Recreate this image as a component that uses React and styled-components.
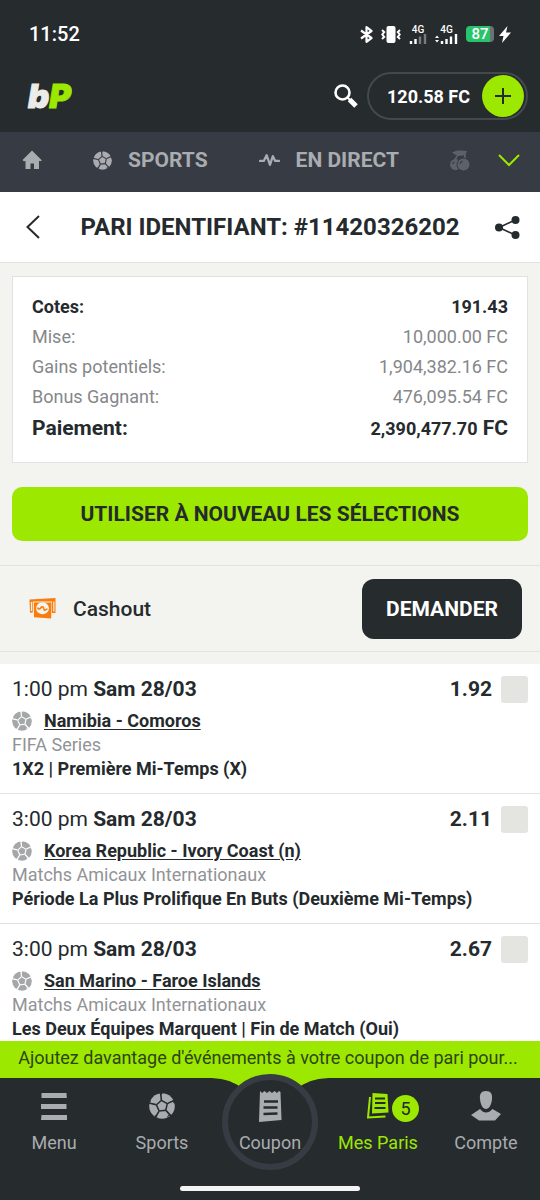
import React from "react";
import styled, { createGlobalStyle } from "styled-components";

const c = {
  dark: "#262b2e",
  slate: "#373b43",
  lime: "#9ce800",
  ink: "#252a2d",
  muted: "#85878a",
  pale: "#a9acb0",
  paper: "#f3f4ef",
  line: "#e2e3df",
};

const GlobalStyle = createGlobalStyle`
  * { box-sizing: border-box; }
  body { margin: 0; font-family: Roboto, "Liberation Sans", sans-serif; color: ${c.ink}; background: ${c.paper}; }
  button { font: inherit; color: inherit; border: 0; padding: 0; background: none; cursor: pointer; }
  svg { display: block; flex: none; }
  h1, h2, p, dl, dt, dd, ul { margin: 0; padding: 0; }
`;

const Shell = styled.div`
  display: flex;
  flex-direction: column;
  height: 100vh;
`;

const StatusBar = styled.div`
  display: flex;
  align-items: center;
  justify-content: space-between;
  height: 60px;
  padding: 8px 29px 0 29px;
  background: ${c.dark};
  color: #fff;
  font-size: 20px;
  font-weight: 500;
`;

const StatusIcons = styled.div`
  display: flex;
  align-items: center;
  gap: 8px;
`;

const Signal = styled.div`
  display: flex;
  flex-direction: column;
  align-items: center;
  font-size: 10px;
  line-height: 9px;
`;

const Power = styled.div`
  display: flex;
  align-items: center;
  gap: 5px;
`;

const BatteryPill = styled.div`
  height: 16px;
  width: 28px;
  border-radius: 4px;
  background: linear-gradient(90deg, #27c46b 24px, #6c7174 24px);
  font-size: 15px;
  line-height: 17px;
  text-align: center;
`;

const Header = styled.header`
  display: flex;
  align-items: center;
  height: 72px;
  padding: 0 12px 0 28px;
  background: ${c.dark};
  color: #fff;
`;

const Logo = styled.a`
  margin-right: auto;
  font-family: Inter, Roboto, sans-serif;
  font-size: 33px;
  font-weight: 900;
  font-style: italic;
  line-height: 40px;
  color: #ebebe8;
  -webkit-text-stroke: 1px currentColor;
  text-decoration: none;
  span { color: ${c.lime}; }
`;

const Balance = styled.div`
  display: flex;
  align-items: center;
  justify-content: space-between;
  width: 161px;
  height: 48px;
  margin-left: 9px;
  padding: 0 2px 0 18px;
  border: 2px solid #44494f;
  border-radius: 24px;
  font-size: 18px;
  font-weight: 700;
  white-space: nowrap;
`;

const AddButton = styled.button`
  display: grid;
  place-items: center;
  width: 42px;
  height: 42px;
  border-radius: 50%;
  background: ${c.lime};
`;

const Tabs = styled.nav`
  display: flex;
  align-items: center;
  height: 60px;
  padding: 0 20px 4px 22px;
  background: ${c.slate};
  color: ${c.pale};
`;

const Tab = styled.a`
  display: flex;
  align-items: center;
  gap: 16px;
  margin-right: ${(p) => (p.$last ? 0 : 51)}px;
  color: inherit;
  font-size: 21px;
  font-weight: 700;
  text-decoration: none;
  white-space: nowrap;
`;

const ExpandButton = styled.button`
  margin-left: auto;
  color: ${c.lime};
`;

const TitleBar = styled.div`
  display: flex;
  align-items: center;
  justify-content: space-between;
  height: 71px;
  padding: 0 20px 0 26px;
  background: #fff;
  border-bottom: 1px solid ${c.line};
`;

const BackButton = styled.button`
  width: 19px;
`;

const Title = styled.h1`
  font-size: 24px;
  font-weight: 700;
  white-space: nowrap;
`;

const Main = styled.main`
  flex: 1;
  min-height: 0;
  overflow-y: auto;
  scrollbar-width: none;
`;

const Summary = styled.dl`
  margin: 13px 12px 24px;
  padding: 15px 19px 17px;
  background: #fff;
  border: 1px solid ${c.line};
`;

const SummaryRow = styled.div`
  display: flex;
  justify-content: space-between;
  line-height: 30px;
  font-size: 18px;
  font-weight: ${(p) => (p.$strong ? 700 : 400)};
  color: ${(p) => (p.$strong ? c.ink : c.muted)};
`;

const TotalRow = styled(SummaryRow)`
  font-size: 21px;
  line-height: 32px;
  dd span { font-size: 18px; }
`;

const ReuseButton = styled.button`
  display: block;
  width: calc(100% - 24px);
  height: 54px;
  margin: 0 12px 24px;
  border-radius: 10px;
  background: ${c.lime};
  font-size: 21px;
  font-weight: 700;
`;

const Cashout = styled.section`
  display: flex;
  align-items: center;
  height: 87px;
  padding: 0 18px 0 29px;
  border: solid ${c.line};
  border-width: 1px 0;
`;

const CashoutTitle = styled.h2`
  margin-left: 17px;
  font-size: 21px;
  font-weight: 500;
`;

const RequestButton = styled.button`
  width: 160px;
  height: 60px;
  margin-left: auto;
  border-radius: 12px;
  background: ${c.dark};
  color: #fff;
  font-size: 21px;
  font-weight: 700;
`;

const BetList = styled.ul`
  margin-top: 12px;
  background: #fff;
  list-style: none;
`;

const Bet = styled.li`
  padding: 11px 12px 12px;
  border-bottom: 1px solid ${c.line};
  font-size: 18px;
  line-height: 24px;
`;

const BetHead = styled.div`
  display: flex;
  align-items: center;
  height: 28px;
  margin-bottom: 6px;
  font-size: 21px;
`;

const Odds = styled.strong`
  margin-left: auto;
`;

const PickBox = styled.input`
  appearance: none;
  width: 27px;
  height: 27px;
  margin: 0 0 0 9px;
  border-radius: 3px;
  background: #e4e5e1;
`;

const Teams = styled.div`
  display: flex;
  align-items: center;
  gap: 12px;
  color: #a5a7a8;
`;

const MatchLink = styled.a`
  color: ${c.ink};
  font-weight: 700;
  text-underline-offset: 2px;
`;

const League = styled.p`
  color: #919396;
`;

const Market = styled.p`
  font-weight: 700;
  white-space: nowrap;
`;

const Promo = styled.p`
  height: 37px;
  flex: none;
  padding-right: 4px;
  background: ${c.lime};
  color: #2d4415;
  font-size: 18px;
  line-height: 33px;
  text-align: center;
  white-space: nowrap;
`;

const BottomNav = styled.nav`
  position: relative;
  display: flex;
  flex: none;
  height: 98px;
  background: ${c.dark};
`;

const Notch = styled.svg`
  position: absolute;
  top: 0;
  left: calc(50% - 65px);
`;

const NavItem = styled.a`
  position: relative;
  display: flex;
  flex: 1 1 0;
  flex-direction: column;
  align-items: center;
  color: ${(p) => (p.$active ? c.lime : c.pale)};
  font-size: 18px;
  line-height: 24px;
  text-decoration: none;
  white-space: nowrap;
`;

const Ring = styled.span`
  position: absolute;
  top: -4px;
  left: calc(50% - 48px);
  width: 96px;
  height: 96px;
  border: 6px solid ${c.slate};
  border-radius: 50%;
  background: ${c.dark};
`;

const NavIcon = styled.span`
  position: relative;
  display: flex;
  align-items: center;
  height: 53px;
  padding-top: 3px;
`;

const NavLabel = styled.span`
  position: relative;
`;

const Count = styled.span`
  position: absolute;
  top: 17px;
  left: 25px;
  width: 27px;
  height: 27px;
  border-radius: 50%;
  background: ${c.lime};
  color: ${c.ink};
  line-height: 28px;
  text-align: center;
`;

const HomeBar = styled.div`
  flex: none;
  height: 24px;
  padding-top: 10px;
  background: ${c.dark};
  &::after {
    content: "";
    display: block;
    width: 180px;
    height: 5px;
    margin: 0 auto;
    border-radius: 3px;
    background: #f4f4f4;
  }
`;

const Ball = ({ size, gap }) => (
  <svg width={size} height={size} viewBox="0 0 26 26" aria-hidden="true">
    <circle cx="13" cy="13" r="12.8" fill="currentColor" />
    <g transform="rotate(-6 13 13)">
      <path d="M13 6.4 19.3 11 16.9 18.4H9.1L6.7 11Z" fill={gap} />
      <path
        d="M13 7V0M19 11l7-2.5M16.6 18l4.4 6M9.4 18 5 24M7 11 0 8.5"
        stroke={gap}
        strokeWidth="1.6"
      />
      <path d="M13 8.2 17.6 11.5 15.8 16.9h-5.6L8.400 11.5Z" fill="currentColor" />
    </g>
    <path d="M10 0 14 0 12.2 1.8ZM25 7l1 4-2-1.600ZM22 21l-4 4 .8-2.400ZM5 22l4 3-1.800-2.400ZM0 9l1-3 .8 2.800Z" fill={gap} />
  </svg>
);

const Bluetooth = () => (
  <svg width="13" height="17" viewBox="0 0 13 17" fill="none" stroke="#fff" strokeWidth="2.2" strokeLinejoin="round">
    <path d="M1 4.500 11.500 12 6.500 15.800V1.200L11.500 5 1 12.500" />
  </svg>
);

const Vibrate = () => (
  <svg width="20" height="17" viewBox="0 0 20 17">
    <rect x="5.500" y="0" width="9" height="17" rx="2" fill="#fff" />
    <path d="M1 4 3.200 6 1.300 8.500 3.200 11 1 13M19 4 16.800 6 18.700 8.500 16.800 11 19 13" fill="none" stroke="#fff" strokeWidth="2" />
  </svg>
);

const Bars = ({ weak }) => (
  <svg width={weak ? 18 : 23} height="10" viewBox={weak ? "5 0 18 10" : "0 0 23 10"}>
    {!weak && <path d="M0 4 2 1.500 4 4ZM0 6 2 8.500 4 6Z" fill="#fff" />}
    <path d="M7 7v3M11.500 5v5" stroke="#fff" strokeWidth="2.400" />
    <path d="M16 2.500V10M21 0v10" stroke={weak ? "#777b7e" : "#fff"} strokeWidth="2.400" />
  </svg>
);

const bets = [
  { time: "1:00 pm", date: "Sam 28/03", odds: "1.92", match: "Namibia - Comoros", league: "FIFA Series", market: "1X2 | Première Mi-Temps (X)" },
  { time: "3:00 pm", date: "Sam 28/03", odds: "2.11", match: "Korea Republic - Ivory Coast (n)", league: "Matchs Amicaux Internationaux", market: "Période La Plus Prolifique En Buts (Deuxième Mi-Temps)" },
  { time: "3:00 pm", date: "Sam 28/03", odds: "2.67", match: "San Marino - Faroe Islands", league: "Matchs Amicaux Internationaux", market: "Les Deux Équipes Marquent | Fin de Match (Oui)" },
];

export default function App() {
  return (
    <Shell>
      <GlobalStyle />
      <StatusBar>
        <span>11:52</span>
        <StatusIcons>
          <Bluetooth />
          <Vibrate />
          <Signal>4G<Bars weak /></Signal>
          <Signal>4G<Bars /></Signal>
          <Power>
            <BatteryPill>87</BatteryPill>
            <svg width="12" height="17" viewBox="0 0 12 17"><path d="M8.500 0 0 10h4.500L3 17 12 6.500H7Z" fill="#fff" /></svg>
          </Power>
        </StatusIcons>
      </StatusBar>
      <Header>
        <Logo href="#accueil">b<span>P</span></Logo>
        <button aria-label="Rechercher">
          <svg width="24" height="24" viewBox="0 0 24 24" fill="none" stroke="#fff">
            <circle cx="8.500" cy="8.500" r="7" strokeWidth="2.600" />
            <path d="m13.500 13.500 2.500 2.500" strokeWidth="2" />
            <path d="m15.500 15.500 6.500 6.500" strokeWidth="5" />
          </svg>
        </button>
        <Balance>
          120.58 FC
          <AddButton aria-label="Déposer">
            <svg width="16" height="16" viewBox="0 0 16 16" stroke={c.ink} strokeWidth="2"><path d="M8 0v16M0 8h16" /></svg>
          </AddButton>
        </Balance>
      </Header>
      <Tabs>
        <Tab href="#accueil" aria-label="Accueil">
          <svg width="20" height="20" viewBox="0 0 20 20" fill="currentColor">
            <path d="M10 .500 20 10.500 18 11.200 17 10.800V19h-5v-5.500H8.500V19H3.500V10.800L2 11.500.500 10Z" />
          </svg>
        </Tab>
        <Tab href="#sports"><Ball size={19} gap={c.slate} />SPORTS</Tab>
        <Tab href="#direct">
          <svg width="21" height="16" viewBox="0 0 22 16" fill="none" stroke="currentColor" strokeWidth="2.4" strokeLinejoin="round" strokeLinecap="round">
            <path d="M1 9h4L8 3l3.500 10 3-9 2.500 5h4" />
          </svg>
          EN DIRECT
        </Tab>
        <Tab href="#casino" aria-label="Casino" $last>
          <svg width="20" height="21" viewBox="0 0 20 21" fill="#5d6168">
            <path d="M2 2.500C6 0 11 0 17 1c-1 3-2 4-4.500 4.500C9 6.500 5 5 2 2.500Z" />
            <path d="M11 4C7 5 6 7 5 10M15 3c-1 3 0 5 1 7" fill="none" stroke="#5d6168" strokeWidth="1.800" />
            <circle cx="5.500" cy="14.500" r="5.500" />
            <circle cx="13.500" cy="14.500" r="6.500" stroke={c.slate} />
            <path d="M2.500 14a3 3 0 0 1 2-2M10 14a4 4 0 0 1 2.500-3" fill="none" stroke={c.slate} strokeWidth="1.200" />
          </svg>
        </Tab>
        <ExpandButton aria-label="Plus de sections">
          <svg width="22" height="13" viewBox="0 0 22 13" fill="none" stroke="currentColor" strokeWidth="2"><path d="m1 1 10 10L21 1" /></svg>
        </ExpandButton>
      </Tabs>
      <TitleBar>
        <BackButton aria-label="Retour">
          <svg width="14" height="24" viewBox="0 0 14 24" fill="none" stroke={c.ink} strokeWidth="2"><path d="M13 1 1.500 12 13 23" /></svg>
        </BackButton>
        <Title>PARI IDENTIFIANT: #11420326202</Title>
        <button aria-label="Partager">
          <svg width="25" height="23" viewBox="0 0 25 23" fill={c.ink}>
            <path d="M20 4 4 11.500 20 19" fill="none" stroke={c.ink} strokeWidth="1.600" />
            <circle cx="4" cy="11.500" r="4" /><circle cx="20.500" cy="4" r="4" /><circle cx="20.500" cy="19" r="4" />
          </svg>
        </button>
      </TitleBar>
      <Main>
        <Summary>
          <SummaryRow $strong><dt>Cotes:</dt><dd>191.43</dd></SummaryRow>
          <SummaryRow><dt>Mise:</dt><dd>10,000.00 FC</dd></SummaryRow>
          <SummaryRow><dt>Gains potentiels:</dt><dd>1,904,382.16 FC</dd></SummaryRow>
          <SummaryRow><dt>Bonus Gagnant:</dt><dd>476,095.54 FC</dd></SummaryRow>
          <TotalRow $strong><dt>Paiement:</dt><dd><span>2,390,477.70</span> FC</dd></TotalRow>
        </Summary>
        <ReuseButton>UTILISER À NOUVEAU LES SÉLECTIONS</ReuseButton>
        <Cashout>
          <svg width="27" height="21" viewBox="0 0 27 21">
            <path d="M.5 1.500 26.500 0V15H23V3.500H3.800V14.500L1 14.800Z" fill="#f97c0c" />
            <path d="M2.500 4v9M24.800 3.500v10" stroke={c.paper} strokeWidth="1.200" />
            <path d="M4.800 4.500h17.700l-.300 16-17.200-1.300Z" fill="#f97c0c" />
            <ellipse cx="13.500" cy="10.200" rx="6.400" ry="6" fill={c.paper} />
            <path d="M8.500 9.500c.500 1.500 2 2 3 .800s1.800-2.300 2.800-1c.800 1 .200 3 1.400 3s1.600-1.300 2.800-1.300" fill="none" stroke="#f97c0c" strokeWidth="1.600" />
          </svg>
          <CashoutTitle>Cashout</CashoutTitle>
          <RequestButton>DEMANDER</RequestButton>
        </Cashout>
        <BetList>
          {bets.map((b) => (
            <Bet key={b.match}>
              <BetHead>
                <span>{b.time} <strong>{b.date}</strong></span>
                <Odds>{b.odds}</Odds>
                <PickBox type="checkbox" aria-label={b.match} />
              </BetHead>
              <Teams><Ball size={20} gap="#fff" /><MatchLink href="#match">{b.match}</MatchLink></Teams>
              <League>{b.league}</League>
              <Market>{b.market}</Market>
            </Bet>
          ))}
        </BetList>
      </Main>
      <Promo>Ajoutez davantage d'événements à votre coupon de pari pour...</Promo>
      <BottomNav>
        <Notch width="130" height="12" viewBox="0 0 130 12">
          <path d="M0 0C18 0 24 2 36 9H94C106 2 112 0 130 0Z" fill={c.lime} />
        </Notch>
        <NavItem href="#menu">
          <NavIcon><svg width="26" height="27" viewBox="0 0 26 27" fill="currentColor"><path d="M.500 0h25l.300 5H.500ZM0 11h25.500v5H0ZM.500 22H26v5H0Z" /></svg></NavIcon>
          <NavLabel>Menu</NavLabel>
        </NavItem>
        <NavItem href="#sports">
          <NavIcon><Ball size={26} gap={c.dark} /></NavIcon>
          <NavLabel>Sports</NavLabel>
        </NavItem>
        <NavItem href="#coupon">
          <Ring />
          <NavIcon>
            <svg width="23" height="31" viewBox="0 0 23 31">
              <path d="M1 0 3 2 5.500 0 8 2 10.500 0 13 2 15.500 0 18 2 20 0 21.500 1 22.500 29 0 31Z" fill="currentColor" />
              <path d="M5 10.500h14M4.500 16.500H18.500M4.500 23l14-.500" stroke={c.dark} strokeWidth="2.600" />
            </svg>
          </NavIcon>
          <NavLabel>Coupon</NavLabel>
        </NavItem>
        <NavItem href="#paris" $active>
          <NavIcon>
            <svg width="22" height="26" viewBox="0 0 22 26">
              <path d="M5.500 0 20.500 1 21.500 19.500 5 20.500Z" fill="currentColor" />
              <path d="M8 5.500h10M8 10h10.500M7.500 15h11" stroke={c.dark} strokeWidth="2" />
              <path d="M3 4 1 24.500 18.500 23.500" fill="none" stroke="currentColor" strokeWidth="2" />
            </svg>
            <Count>5</Count>
          </NavIcon>
          <NavLabel>Mes Paris</NavLabel>
        </NavItem>
        <NavItem href="#compte">
          <NavIcon>
            <svg width="30" height="30" viewBox="0 0 30 30" fill="currentColor">
              <path d="M15 0c5 0 6.500 3 6 8-.500 6-3 10-6 10S9.500 14 9 8c-.500-5 1-8 6-8Z" />
              <path d="M9 18c2 2.500 4 3.500 6 3.500S19.500 20.500 21.500 18L30 23l-6 6.500H8L0 24Z" />
            </svg>
          </NavIcon>
          <NavLabel>Compte</NavLabel>
        </NavItem>
      </BottomNav>
      <HomeBar />
    </Shell>
  );
}
